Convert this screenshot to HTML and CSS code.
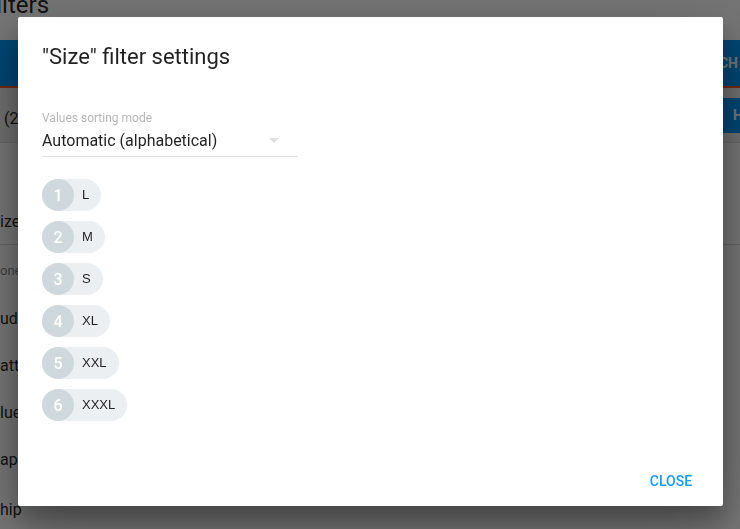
FILE: index.html
```html
<!DOCTYPE html>
<html>
<head>
<meta charset="utf-8">
<title>Size filter settings</title>
<link rel="stylesheet" href="styles.css">
</head>
<body>
<div class="page">
  <h1 class="page-title">Filters</h1>
  <div class="tabbar">
    <span class="tab-text">SEARCH</span>
  </div>
  <div class="toolbar">
    <span class="toolbar-count">(2)</span>
    <span class="toolbar-btn">HIDE</span>
  </div>
  <div class="list">
    <div class="list-head">ize</div>
    <div class="list-sub">one</div>
    <div class="list-item">ud</div>
    <div class="list-item">att</div>
    <div class="list-item">lue</div>
    <div class="list-item">ap</div>
    <div class="list-item">hip</div>
  </div>
</div>

<div class="overlay">
  <div class="dialog">
    <h3 class="dialog-title">"Size" filter settings</h3>
    <div class="dialog-body">
      <div class="field">
        <label class="field-label">Values sorting mode</label>
        <div class="field-row">
          <span class="field-value">Automatic (alphabetical)</span>
          <svg class="field-arrow" width="24" height="24" viewBox="0 0 24 24"><path d="M7 10l5 5 5-5z" fill="#e0e0e0"/></svg>
        </div>
        <div class="field-line"></div>
      </div>
      <div class="chips">
        <div class="chip"><span class="chip-avatar">1</span><span class="chip-label">L</span></div>
        <div class="chip"><span class="chip-avatar">2</span><span class="chip-label">M</span></div>
        <div class="chip"><span class="chip-avatar">3</span><span class="chip-label">S</span></div>
        <div class="chip"><span class="chip-avatar">4</span><span class="chip-label">XL</span></div>
        <div class="chip"><span class="chip-avatar">5</span><span class="chip-label">XXL</span></div>
        <div class="chip"><span class="chip-avatar">6</span><span class="chip-label">XXXL</span></div>
      </div>
    </div>
    <div class="dialog-actions">
      <button class="flat-btn">Close</button>
    </div>
  </div>
</div>
</body>
</html>
```
FILE: styles.css
```css
* { box-sizing: border-box; }
html, body { margin: 0; padding: 0; }
body {
  width: 740px;
  height: 529px;
  overflow: hidden;
  background: #ffffff;
  font-family: Roboto, "Liberation Sans", sans-serif;
  color: rgba(0,0,0,0.87);
}

/* background page */
.page {
  display: flex;
  flex-direction: column;
  height: 529px;
  overflow: hidden;
}
.page > * { flex-shrink: 0; }
.page-title {
  margin: -10px 0 0 -17px;
  font-size: 24px;
  font-weight: 400;
  line-height: 30px;
  color: rgba(0,0,0,0.87);
}
.tabbar {
  margin-top: 20px;
  height: 48px;
  background: #0098f8;
  border-bottom: 2px solid #ff5722;
  display: flex;
  justify-content: flex-end;
  align-items: center;
  padding-right: 2px;
}
.tab-text {
  color: #ffffff;
  font-size: 14px;
  font-weight: 700;
}
.toolbar {
  height: 55px;
  background: #f0f0f0;
  display: flex;
  justify-content: space-between;
  align-items: center;
  padding-left: 4px;
  border-bottom: 1px solid #e0e0e0;
}
.toolbar-count { font-size: 16px; margin-top: 6px; }
.toolbar-btn {
  height: 35px;
  margin-right: -40px;
  padding: 0 16px;
  background: #0098f8;
  color: #ffffff;
  font-size: 14px;
  font-weight: 700;
  display: flex;
  align-items: center;
}
.list { display: flex; flex-direction: column; }
.list-head {
  margin-top: 67px;
  line-height: 24px;
  font-size: 16px;
  padding-bottom: 10px;
  border-bottom: 1px solid #d6d6d6;
}
.list-sub {
  margin-top: 16px;
  line-height: 20px;
  font-size: 13px;
  color: rgba(0,0,0,0.5);
}
.list-sub + .list-item { margin-top: 14px; }
.list-item {
  height: 47px;
  line-height: 47px;
  font-size: 16px;
}
.list-item:last-child { margin-top: 3px; }

/* overlay + dialog */
.overlay {
  position: fixed;
  inset: 0;
  background: rgba(0,0,0,0.54);
}
.dialog {
  position: absolute;
  left: 18px;
  top: 17px;
  width: 705px;
  height: 489px;
  background: #ffffff;
  border-radius: 2px;
  box-shadow: 0 19px 60px rgba(0,0,0,0.30), 0 15px 20px rgba(0,0,0,0.22);
  display: flex;
  flex-direction: column;
}
.dialog-title {
  margin: 0;
  padding: 24px 24px 20px;
  font-size: 22px;
  font-weight: 400;
  line-height: 32px;
  color: rgba(0,0,0,0.87);
}
.dialog-body {
  flex: 1;
  padding: 0 24px;
  display: flex;
  flex-direction: column;
}
.field {
  width: 256px;
  height: 72px;
  display: flex;
  flex-direction: column;
}
.field-label {
  margin-top: 17px;
  font-size: 12px;
  line-height: 16px;
  color: rgba(0,0,0,0.3);
}
.field-row {
  margin-top: 2px;
  height: 24px;
  display: flex;
  align-items: center;
  justify-content: space-between;
}
.field-value {
  font-size: 16px;
  color: rgba(0,0,0,0.87);
}
.field-arrow { margin-right: 12px; }
.field-line {
  margin-top: 4px;
  height: 1px;
  background: #e0e0e0;
}
.chips {
  margin-top: 14px;
  display: flex;
  flex-direction: column;
  align-items: flex-start;
  gap: 10px;
}
.chip {
  display: inline-flex;
  align-items: center;
  height: 32px;
  border-radius: 16px;
  background: #eceff1;
}
.chip-avatar {
  width: 32px;
  height: 32px;
  border-radius: 50%;
  background: #cfd8dc;
  color: #ffffff;
  font-size: 16px;
  font-weight: 500;
  display: flex;
  align-items: center;
  justify-content: center;
  margin-right: -4px;
}
.chip-label {
  padding: 0 12px;
  font-family: "Liberation Sans", Arial, sans-serif;
  font-size: 13px;
  line-height: 32px;
  color: rgba(0,0,0,0.87);
}
.dialog-actions {
  padding: 8px;
  display: flex;
  justify-content: flex-end;
}
.flat-btn {
  height: 36px;
  min-width: 88px;
  padding: 2px 16px 0;
  border: none;
  background: transparent;
  border-radius: 2px;
  font-family: Roboto, "Liberation Sans", sans-serif;
  font-size: 14px;
  font-weight: 500;
  text-transform: uppercase;
  color: #1a9bf0;
}
```
